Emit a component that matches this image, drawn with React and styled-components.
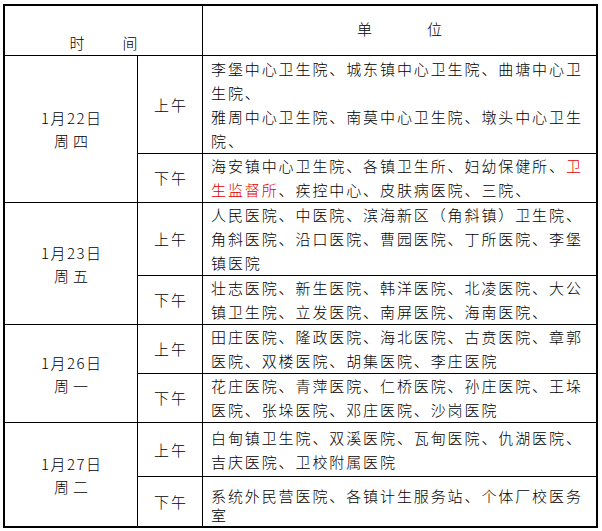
import React from "react";
import styled, { createGlobalStyle } from "styled-components";

const Global = createGlobalStyle`
  html, body {
    margin: 0;
    padding: 0;
    background: #ffffff;
  }
  body {
    font-family: "Noto Sans CJK SC", "Noto Sans", sans-serif;
    color: #000000;
  }
`;

const Table = styled.div`
  margin: 4px 0 0 3px;
  width: 595px;
  box-sizing: border-box;
  border: 2px solid #000;
  background: #000;
  display: grid;
  grid-template-columns: 132px 64px 393px;
  grid-template-rows: 49px 97px 48px 72px 48px 48px 48px 53px 49px;
  gap: 1px;
  font-size: 15px;
  font-weight: 300;
`;

const Cell = styled.div`
  background: #fff;
  display: flex;
  min-width: 0;
  overflow: hidden;
`;

const HeadCell = styled(Cell)`
  grid-column: ${(p) => (p.$wide ? "span 2" : "auto")};
  justify-content: center;
  align-items: ${(p) => (p.$bottom ? "flex-end" : "center")};
  padding-bottom: ${(p) => (p.$bottom ? "0" : "3px")};
  line-height: 24px;
  gap: ${(p) => p.$gap}px;
`;

const DateCell = styled(Cell)`
  grid-row: span 2;
  flex-direction: column;
  justify-content: center;
  align-items: center;
  line-height: 23px;
`;

const DateText = styled.span`
  letter-spacing: 1.5px;
  padding-left: 1.5px;
`;

const WeekText = styled.span`
  letter-spacing: 4px;
  padding-left: 4px;
`;

const SessionCell = styled(Cell)`
  justify-content: center;
  align-items: center;
  letter-spacing: 2px;
  padding-left: 2px;
  line-height: 24px;
`;

const ContentCell = styled(Cell)`
  flex-direction: column;
  justify-content: center;
  padding: ${(p) => (p.$tight ? "6px 0 0 8px" : "0 0 0 8px")};
  line-height: ${(p) => (p.$tight ? "19px" : "24px")};
  letter-spacing: 1.9px;
`;

const Line = styled.div`
  white-space: nowrap;
`;

const Red = styled.span`
  color: #e00000;
`;

const schedule = [
  {
    date: "1月22日",
    week: "周四",
    sessions: [
      {
        label: "上午",
        lines: [
          ["李堡中心卫生院、城东镇中心卫生院、曲塘中心卫"],
          ["生院、"],
          ["雅周中心卫生院、南莫中心卫生院、墩头中心卫生"],
          ["院、"],
        ],
      },
      {
        label: "下午",
        lines: [
          ["海安镇中心卫生院、各镇卫生所、妇幼保健所、", { red: "卫" }],
          [{ red: "生监督所" }, "、疾控中心、皮肤病医院、三院、"],
        ],
      },
    ],
  },
  {
    date: "1月23日",
    week: "周五",
    sessions: [
      {
        label: "上午",
        lines: [
          ["人民医院、中医院、滨海新区（角斜镇）卫生院、"],
          ["角斜医院、沿口医院、曹园医院、丁所医院、李堡"],
          ["镇医院"],
        ],
      },
      {
        label: "下午",
        lines: [
          ["壮志医院、新生医院、韩洋医院、北凌医院、大公"],
          ["镇卫生院、立发医院、南屏医院、海南医院、"],
        ],
      },
    ],
  },
  {
    date: "1月26日",
    week: "周一",
    sessions: [
      {
        label: "上午",
        lines: [
          ["田庄医院、隆政医院、海北医院、古贲医院、章郭"],
          ["医院、双楼医院、胡集医院、李庄医院"],
        ],
      },
      {
        label: "下午",
        lines: [
          ["花庄医院、青萍医院、仁桥医院、孙庄医院、王垛"],
          ["医院、张垛医院、邓庄医院、沙岗医院"],
        ],
      },
    ],
  },
  {
    date: "1月27日",
    week: "周二",
    sessions: [
      {
        label: "上午",
        lines: [
          ["白甸镇卫生院、双溪医院、瓦甸医院、仇湖医院、"],
          ["吉庆医院、卫校附属医院"],
        ],
      },
      {
        label: "下午",
        tight: true,
        lines: [["系统外民营医院、各镇计生服务站、个体厂校医务"], ["室"]],
      },
    ],
  },
];

function Segment({ seg }) {
  if (typeof seg === "string") return seg;
  return <Red>{seg.red}</Red>;
}

export default function App() {
  return (
    <>
      <Global />
      <Table>
        <HeadCell $wide $bottom $gap={38}>
          <span>时</span>
          <span>间</span>
        </HeadCell>
        <HeadCell $gap={55}>
          <span>单</span>
          <span>位</span>
        </HeadCell>
        {schedule.map((day) => (
          <React.Fragment key={day.date}>
            <DateCell>
              <DateText>{day.date}</DateText>
              <WeekText>{day.week}</WeekText>
            </DateCell>
            {day.sessions.map((s) => (
              <React.Fragment key={s.label}>
                <SessionCell>{s.label}</SessionCell>
                <ContentCell $tight={s.tight}>
                  {s.lines.map((line, i) => (
                    <Line key={i}>
                      {line.map((seg, j) => (
                        <Segment key={j} seg={seg} />
                      ))}
                    </Line>
                  ))}
                </ContentCell>
              </React.Fragment>
            ))}
          </React.Fragment>
        ))}
      </Table>
    </>
  );
}
